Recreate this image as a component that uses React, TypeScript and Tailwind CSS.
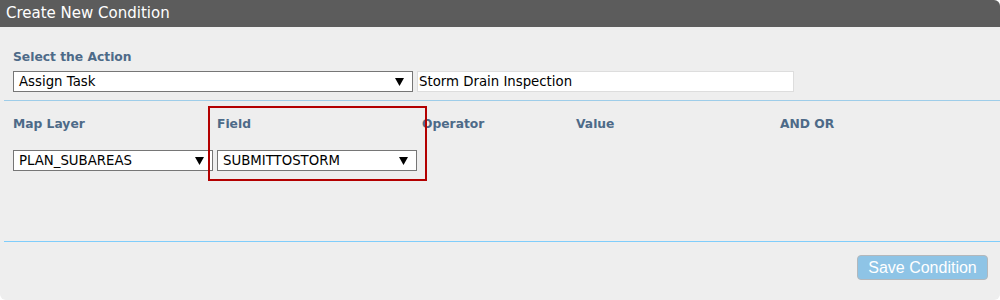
import React from "react";

const font = { fontFamily: '"DejaVu Sans", Verdana, sans-serif' };

function Select({ value, width }: { value: string; width: string }) {
  return (
    <div
      className={`flex items-center justify-between h-[21px] bg-white border border-[#767676] pl-[5px] pr-[8px] text-[13.3px] text-black ${width}`}
    >
      <span>{value}</span>
      <svg width="9" height="8" viewBox="0 0 9 8">
        <polygon points="0,0 9,0 4.5,8" fill="#000" />
      </svg>
    </div>
  );
}

export default function App() {
  return (
    <div className="w-[1000px] h-[300px] bg-white" style={font}>
      <div className="w-[1000px] h-[300px] flex flex-col bg-[#eeeeee] rounded-tr-[6px] rounded-b-[6px] overflow-hidden">
        <div className="h-[27px] bg-[#5c5c5c] text-white text-[15px] pl-[6px] flex items-center">
          Create New Condition
        </div>
        <div className="pl-[13px] pt-[22px]">
          <div className="text-[12.3px] font-bold text-[#4d6a88] leading-[16px]">Select the Action</div>
          <div className="flex gap-[4px] mt-[6px]">
            <Select value="Assign Task" width="w-[400px]" />
            <div className="h-[21px] w-[377px] bg-white border border-[#dddddd] pl-[1px] text-[13.3px] text-black flex items-center">
              Storm Drain Inspection
            </div>
          </div>
        </div>
        <div className="ml-[4px] mt-[8px] h-px bg-[#9ecde9]" />
        <div className="relative pl-[13px] pt-[15px] h-[140px]">
          <div className="flex text-[12.3px] font-bold text-[#4d6a88] leading-[16px]">
            <div className="w-[204px]">Map Layer</div>
            <div className="w-[205px]">Field</div>
            <div className="w-[154px]">Operator</div>
            <div className="w-[204px]">Value</div>
            <div>AND OR</div>
          </div>
          <div className="flex gap-[4px] mt-[18px]">
            <Select value="PLAN_SUBAREAS" width="w-[200px]" />
            <Select value="SUBMITTOSTORM" width="w-[200px]" />
          </div>
          <div className="absolute left-[208px] top-[5px] w-[219px] h-[75px] border-2 border-[#b30000]" />
        </div>
        <div className="ml-[4px] h-px bg-[#7fcdfb]" />
        <div className="flex justify-end pr-[12px] pt-[13px]">
          <button
            className="h-[25px] w-[131px] rounded-[4px] bg-[#8ec4e6] border border-[#b3b8bc] text-white text-[16px] flex items-center justify-center"
            style={{ fontFamily: '"Liberation Sans", Arial, sans-serif' }}
          >
            Save Condition
          </button>
        </div>
      </div>
    </div>
  );
}
